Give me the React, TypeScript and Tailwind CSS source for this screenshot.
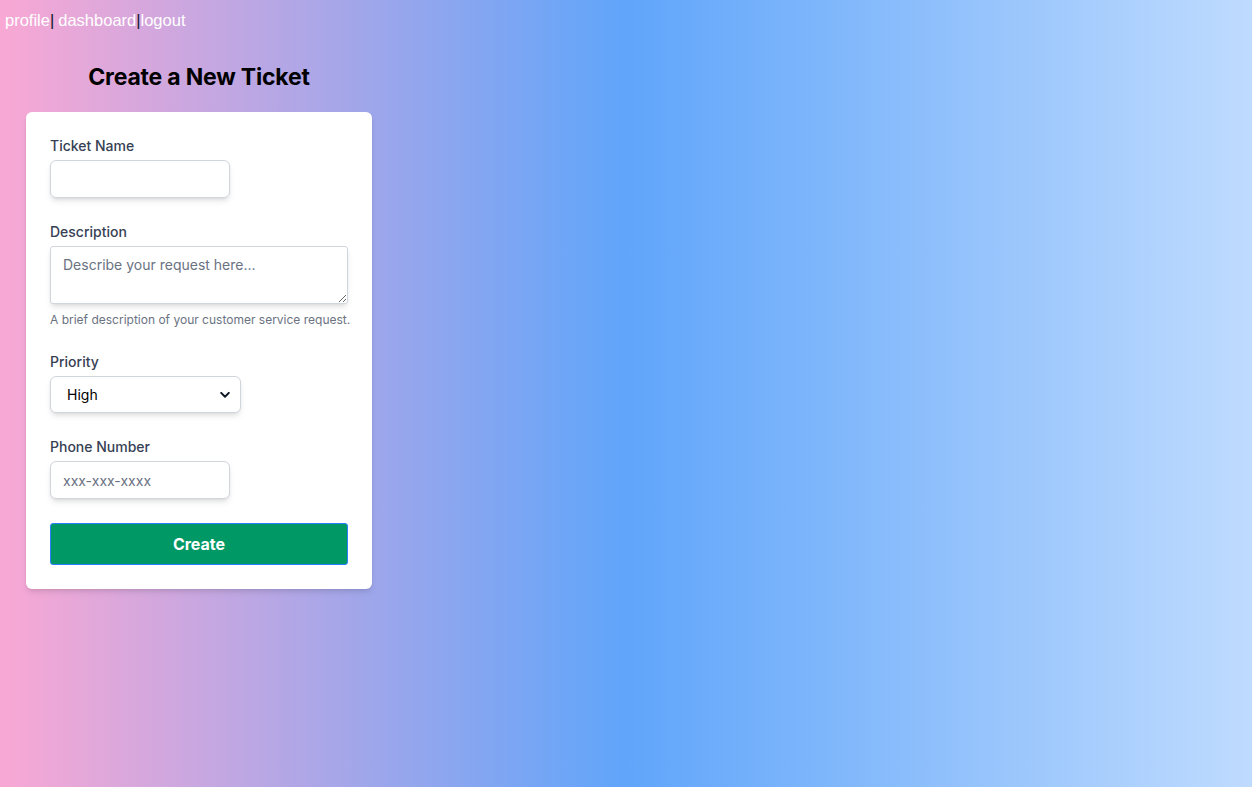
import React from 'react';

const ChevronDown = () => (
  <svg className="pointer-events-none absolute right-[11px] top-1/2 -translate-y-1/2" width="10" height="7" viewBox="0 0 10 7" fill="none">
    <path d="M1.2 1.4 5 5.2l3.8-3.8" stroke="#111827" strokeWidth="2" strokeLinecap="round" strokeLinejoin="round" />
  </svg>
);

const App: React.FC = () => {
  return (
    <div className="min-h-[787px] w-full bg-[linear-gradient(to_right,#f9a8d4,#60a5fa_50%,#bfdbfe)]">
      {/* nav */}
      <nav className="flex pl-[5px] pt-2 text-[16.5px] leading-6 font-['Liberation_Sans',Arial,sans-serif]">
        <a className="text-white">profile</a>
        <span className="text-gray-900">|</span>
        <a className="ml-[4px] text-white">dashboard</a>
        <span className="text-gray-900">|</span>
        <a className="text-white">logout</a>
      </nav>

      <div className="w-[346px] ml-[26px] font-['Inter',sans-serif]">
        <h1 className="mt-[29px] text-center text-[23px] leading-[32px] font-bold text-black tracking-[-0.2px]">Create a New Ticket</h1>

        <form className="mt-[19px] rounded-md bg-white p-6 shadow-md flex flex-col gap-6">
          <div>
            <label className="mb-1 block text-sm font-medium leading-5 text-gray-700">Ticket Name</label>
            <input type="text" className="h-[38px] w-[180px] rounded-md border border-gray-300 bg-white px-3 text-sm shadow-md outline-none" />
          </div>

          <div>
            <label className="mb-1 block text-sm font-medium leading-5 text-gray-700">Description</label>
            <textarea
              rows={2}
              placeholder="Describe your request here..."
              className="block h-[58px] w-full rounded-[3px] border border-gray-300 bg-white px-3 py-2 text-sm leading-5 shadow-md outline-none placeholder:text-gray-500"
            />
            <p className="mt-2 whitespace-nowrap text-xs leading-4 text-gray-500">A brief description of your customer service request.</p>
          </div>

          <div>
            <label className="mb-1 block text-sm font-medium leading-5 text-gray-700">Priority</label>
            <div className="relative w-[191px]">
              <select defaultValue="High" className="h-[37px] w-full appearance-none rounded-md border border-gray-300 bg-white pl-4 pr-8 text-sm text-black shadow-md outline-none">
                <option>Low</option>
                <option>Medium</option>
                <option>High</option>
              </select>
              <ChevronDown />
            </div>
          </div>

          <div>
            <label className="mb-1 block text-sm font-medium leading-5 text-gray-700">Phone Number</label>
            <input
              type="tel"
              placeholder="xxx-xxx-xxxx"
              className="h-[38px] w-[180px] rounded-md border border-gray-300 bg-white px-3 text-sm shadow-md outline-none placeholder:text-gray-500"
            />
          </div>

          <button type="button" className="h-[42px] w-full rounded-[3px] border border-blue-500 bg-emerald-600 text-base font-bold text-white">
            Create
          </button>
        </form>
      </div>
    </div>
  );
};

export default App;
